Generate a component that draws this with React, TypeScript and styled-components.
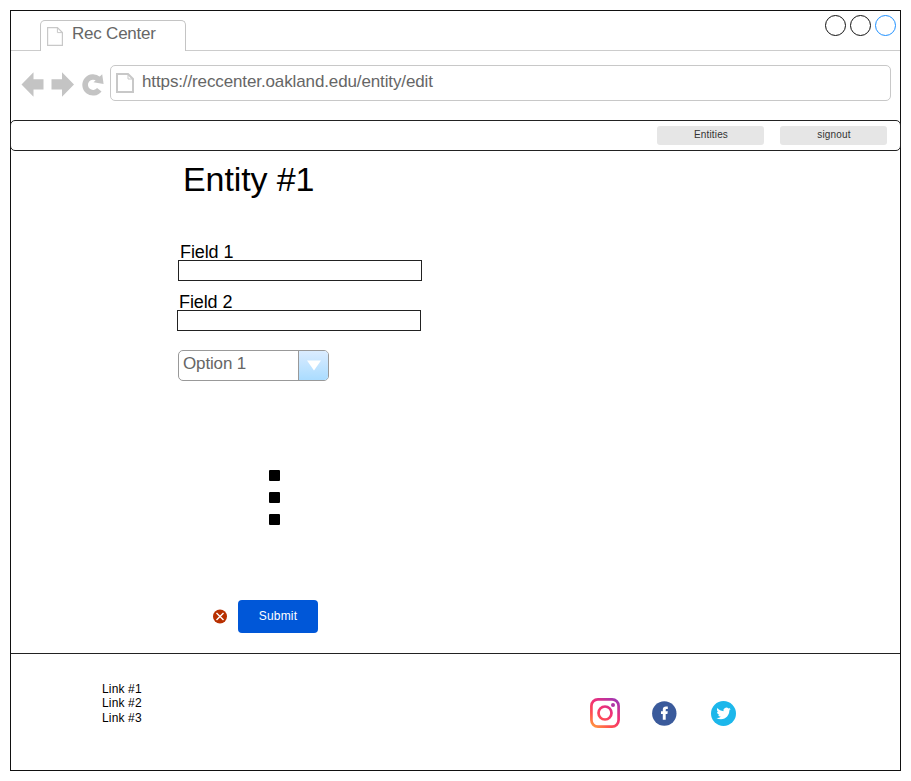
import React from "react";
import styled, { createGlobalStyle } from "styled-components";

const GlobalStyle = createGlobalStyle`
  * { box-sizing: border-box; }
  body {
    margin: 0;
    background: #fff;
    font-family: "Liberation Sans", Arial, Helvetica, sans-serif;
    color: #000;
  }
`;

const Browser = styled.div`
  width: 891px;
  height: 761px;
  margin: 10px 0 0 10px;
  border: 1px solid #111;
  display: flex;
  flex-direction: column;
`;

const TabStrip = styled.div`
  display: flex;
  height: 40px;
  flex: none;
  align-items: flex-end;
`;

const StripLine = styled.div<{ $width: number }>`
  height: 1px;
  background: #ccc;
  flex: 0 0 ${(p) => p.$width}px;
`;

const Tab = styled.div`
  width: 146px;
  height: 31px;
  flex: none;
  display: flex;
  gap: 9px;
  padding: 6px 0 0 6px;
  border: 1px solid #c4c4c4;
  border-bottom: 0;
  border-radius: 5px 5px 0 0;
`;

const TabTitle = styled.span`
  font-size: 17px;
  line-height: 20px;
  margin-top: -3px;
  color: #666;
  white-space: nowrap;
  letter-spacing: -0.22px;
`;

const StripEnd = styled.div`
  flex: 1;
  height: 40px;
  display: flex;
  justify-content: flex-end;
  gap: 4px;
  padding: 4px 4px 0 0;
  border-bottom: 1px solid #ccc;
`;

const WindowDot = styled.span<{ $color: string }>`
  width: 21px;
  height: 21px;
  border: 1px solid ${(p) => p.$color};
  border-radius: 50%;
`;

const Toolbar = styled.div`
  display: flex;
  flex: none;
  height: 69px;
  padding: 14px 9px 0 10px;
`;

const NavIcons = styled.div`
  width: 89px;
  flex: none;
  padding-top: 6px;
`;

const AddressBar = styled.div`
  flex: 1;
  height: 36px;
  display: flex;
  gap: 8px;
  padding: 7px 5px;
  border: 1px solid #c8c8c8;
  border-radius: 5px;
`;

const Url = styled.span`
  font-size: 17px;
  line-height: 20px;
  margin-top: -1px;
  color: #666;
  white-space: nowrap;
  letter-spacing: -0.12px;
`;

const SiteNav = styled.nav`
  display: flex;
  flex: none;
  justify-content: flex-end;
  gap: 16px;
  height: 31px;
  margin: 0 -1px;
  padding: 5px 13px 0 0;
  border: 1px solid #222;
  border-radius: 5px;
`;

const NavButton = styled.button`
  width: 107px;
  height: 19px;
  padding: 0 0 2px 1px;
  border: 0;
  border-radius: 3px;
  background: #e6e6e6;
  color: #333;
  font: 10px/16px "Liberation Sans", Arial, sans-serif;
  letter-spacing: 0.15px;
`;

const Main = styled.main`
  flex: 1;
  padding: 8px 0 0 166px;
`;

const Title = styled.h1`
  margin: 0 0 0 6px;
  font-size: 34px;
  line-height: 40px;
  font-weight: 400;
  letter-spacing: -0.1px;
`;

const Form = styled.form`
  margin-top: 43px;
`;

const Field = styled.label<{ $indent: number }>`
  display: block;
  width: 244px;
  height: 50px;
  margin-left: ${(p) => p.$indent}px;
`;

const FieldLabel = styled.span`
  display: block;
  padding: 1px 0 0 2px;
  font-size: 18px;
  line-height: 18px;
  height: 18px;
  letter-spacing: -0.1px;
`;

const TextInput = styled.input`
  display: block;
  width: 244px;
  height: 21px;
  margin: 0;
  padding: 0 4px;
  border: 1px solid #222;
  border-radius: 0;
  background: #fff;
  outline: 0;
`;

const Select = styled.div`
  display: flex;
  width: 151px;
  height: 31px;
  margin: 8px 0 0 1px;
  border: 1px solid #999;
  border-radius: 5px;
  overflow: hidden;
`;

const SelectValue = styled.span`
  flex: 1;
  padding: 3px 0 0 4px;
  font-size: 17px;
  line-height: 20px;
  letter-spacing: -0.15px;
  color: #666;
`;

const SelectArrow = styled.span`
  width: 31px;
  margin-right: -1px;
  display: flex;
  justify-content: center;
  padding-top: 9px;
  border-left: 1px solid #999;
  background: linear-gradient(#dbecff, #aadcff);
`;

const Ellipsis = styled.div`
  display: flex;
  flex-direction: column;
  gap: 11px;
  margin: 89px 0 0 92px;
`;

const Square = styled.span`
  width: 11px;
  height: 11px;
  border-radius: 1px;
  background: #000;
`;

const Actions = styled.div`
  display: flex;
  align-items: center;
  gap: 10px;
  margin: 75px 0 0 36px;
`;

const SubmitButton = styled.button`
  width: 80px;
  height: 33px;
  padding: 0;
  border: 0;
  border-radius: 4px;
  background: #0057d8;
  color: #fff;
  font: 12px/33px "Liberation Sans", Arial, sans-serif;
  letter-spacing: 0.2px;
`;

const Footer = styled.footer`
  display: flex;
  flex: none;
  height: 117px;
  border-top: 1px solid #222;
  padding: 28px 0 0 91px;
`;

const Links = styled.div`
  width: 488px;
  display: flex;
  flex-direction: column;
`;

const FooterLink = styled.a`
  font-size: 12px;
  line-height: 14.4px;
  letter-spacing: 0.15px;
`;

const Social = styled.div`
  display: grid;
  grid-template-columns: 61.500px 59.500px 25px;
  align-items: center;
  height: 30px;
  margin-top: 16px;
`;

const Drawing = styled.svg<{ $top?: number }>`
  display: block;
  flex: none;
  margin-top: ${(p) => p.$top ?? 0}px;
`;

function PageIcon({ width, height, stroke }: { width: number; height: number; stroke: number }) {
  const h = stroke / 2;
  const f = 5;
  return (
    <Drawing width={width} height={height} fill="none" stroke="#c8c8c8" strokeWidth={stroke}>
      <path d={`M${h} ${h}H${width - h - f}L${width - h} ${h + f}V${height - h}H${h}Z`} />
      <path d={`M${width - h - f} ${h}V${h + f}H${width - h}`} strokeWidth={1} />
    </Drawing>
  );
}

function Navigation() {
  return (
    <NavIcons>
      <Drawing width="84" height="28" viewBox="21 71 84 28" fill="#c4c4c4">
        <path d="M21.500 84.500L33.500 72.200V79.300H43.500V89.500H33.500V96.800Z" />
        <path d="M74 84.500L62 72.200V79.300H51.500V89.500H62V96.800Z" />
        <path
          d="M98.300 79A7.900 7.900 0 1 0 99.300 89.700"
          fill="none"
          stroke="#c4c4c4"
          strokeWidth="5.600"
        />
        <path d="M102.200 74.200L103.600 84L93.500 82.300Z" />
      </Drawing>
    </NavIcons>
  );
}

function Instagram() {
  return (
    <Drawing width="30" height="30" viewBox="0 0 30 30" fill="none">
      <defs>
        <linearGradient id="insta" x1="4" y1="30" x2="26" y2="0" gradientUnits="userSpaceOnUse">
          <stop offset="0" stopColor="#ff9b3d" />
          <stop offset=".28" stopColor="#ff4f50" />
          <stop offset=".6" stopColor="#ef2f78" />
          <stop offset="1" stopColor="#9b36b7" />
        </linearGradient>
      </defs>
      <rect x="1.400" y="1.400" width="27.200" height="27.200" rx="6.500" stroke="url(#insta)" strokeWidth="2.700" />
      <circle cx="15" cy="15" r="6.500" stroke="url(#insta)" strokeWidth="2.700" />
      <circle cx="23" cy="7" r="2" fill="#b035a5" />
    </Drawing>
  );
}

function Facebook() {
  return (
    <Drawing $top={1} width="25" height="25" viewBox="0 0 25 25">
      <circle cx="12.300" cy="12.500" r="12.200" fill="#3a5a9b" />
      <path
        fill="#fff"
        d="M10.800 18.800V13.100H9V10.200H10.800V8.600C10.800 6.400 12 5.400 13.900 5.400L15.800 5.500V8H14.700C13.900 8 13.700 8.400 13.700 9V10.200H15.800L15.400 13.100H13.700V18.800Z"
      />
    </Drawing>
  );
}

function Twitter() {
  return (
    <Drawing width="25" height="25" viewBox="0 0 25 25">
      <circle cx="12.500" cy="12.500" r="12.500" fill="#1cb7eb" />
      <path
        fill="#fff"
        transform="translate(5.400 5.200) scale(.6)"
        d="M23.953 4.570a10 10 0 0 1-2.825.775 4.958 4.958 0 0 0 2.163-2.723c-.951.555-2.005.959-3.127 1.184a4.920 4.920 0 0 0-8.384 4.482C7.690 8.095 4.067 6.130 1.640 3.162a4.822 4.822 0 0 0-.666 2.475c0 1.710.870 3.213 2.188 4.096a4.904 4.904 0 0 1-2.228-.616v.060a4.923 4.923 0 0 0 3.946 4.827 4.996 4.996 0 0 1-2.212.085 4.936 4.936 0 0 0 4.604 3.417 9.867 9.867 0 0 1-6.102 2.105c-.390 0-.779-.023-1.170-.067a13.995 13.995 0 0 0 7.557 2.209c9.053 0 13.998-7.496 13.998-13.985 0-.210 0-.420-.015-.630A9.935 9.935 0 0 0 24 4.590z"
      />
    </Drawing>
  );
}

export default function App() {
  return (
    <>
      <GlobalStyle />
      <Browser>
        <TabStrip>
          <StripLine $width={29} />
          <Tab>
            <PageIcon width={16} height={19} stroke={1.2} />
            <TabTitle>Rec Center</TabTitle>
          </Tab>
          <StripEnd>
            <WindowDot $color="#111" />
            <WindowDot $color="#111" />
            <WindowDot $color="#1e90ff" />
          </StripEnd>
        </TabStrip>
        <Toolbar>
          <Navigation />
          <AddressBar>
            <PageIcon width={18} height={20} stroke={2} />
            <Url>https://reccenter.oakland.edu/entity/edit</Url>
          </AddressBar>
        </Toolbar>
        <SiteNav>
          <NavButton>Entities</NavButton>
          <NavButton>signout</NavButton>
        </SiteNav>
        <Main>
          <Title>Entity #1</Title>
          <Form onSubmit={(e) => e.preventDefault()}>
            <Field $indent={1}>
              <FieldLabel>Field 1</FieldLabel>
              <TextInput />
            </Field>
            <Field $indent={0}>
              <FieldLabel>Field 2</FieldLabel>
              <TextInput />
            </Field>
            <Select>
              <SelectValue>Option 1</SelectValue>
              <SelectArrow>
                <Drawing width="14" height="11" fill="#fff">
                  <path d="M0 .5H14L7 10.500Z" />
                </Drawing>
              </SelectArrow>
            </Select>
            <Ellipsis>
              <Square />
              <Square />
              <Square />
            </Ellipsis>
            <Actions>
              <Drawing width="15" height="15" viewBox="0 0 15 15">
                <circle cx="7" cy="7.500" r="7" fill="#b83000" />
                <path d="M3.500 4L10.500 11M10.500 4L3.500 11" stroke="#fff" strokeWidth="1.400" />
              </Drawing>
              <SubmitButton>Submit</SubmitButton>
            </Actions>
          </Form>
        </Main>
        <Footer>
          <Links>
            <FooterLink>Link #1</FooterLink>
            <FooterLink>Link #2</FooterLink>
            <FooterLink>Link #3</FooterLink>
          </Links>
          <Social>
            <Instagram />
            <Facebook />
            <Twitter />
          </Social>
        </Footer>
      </Browser>
    </>
  );
}
